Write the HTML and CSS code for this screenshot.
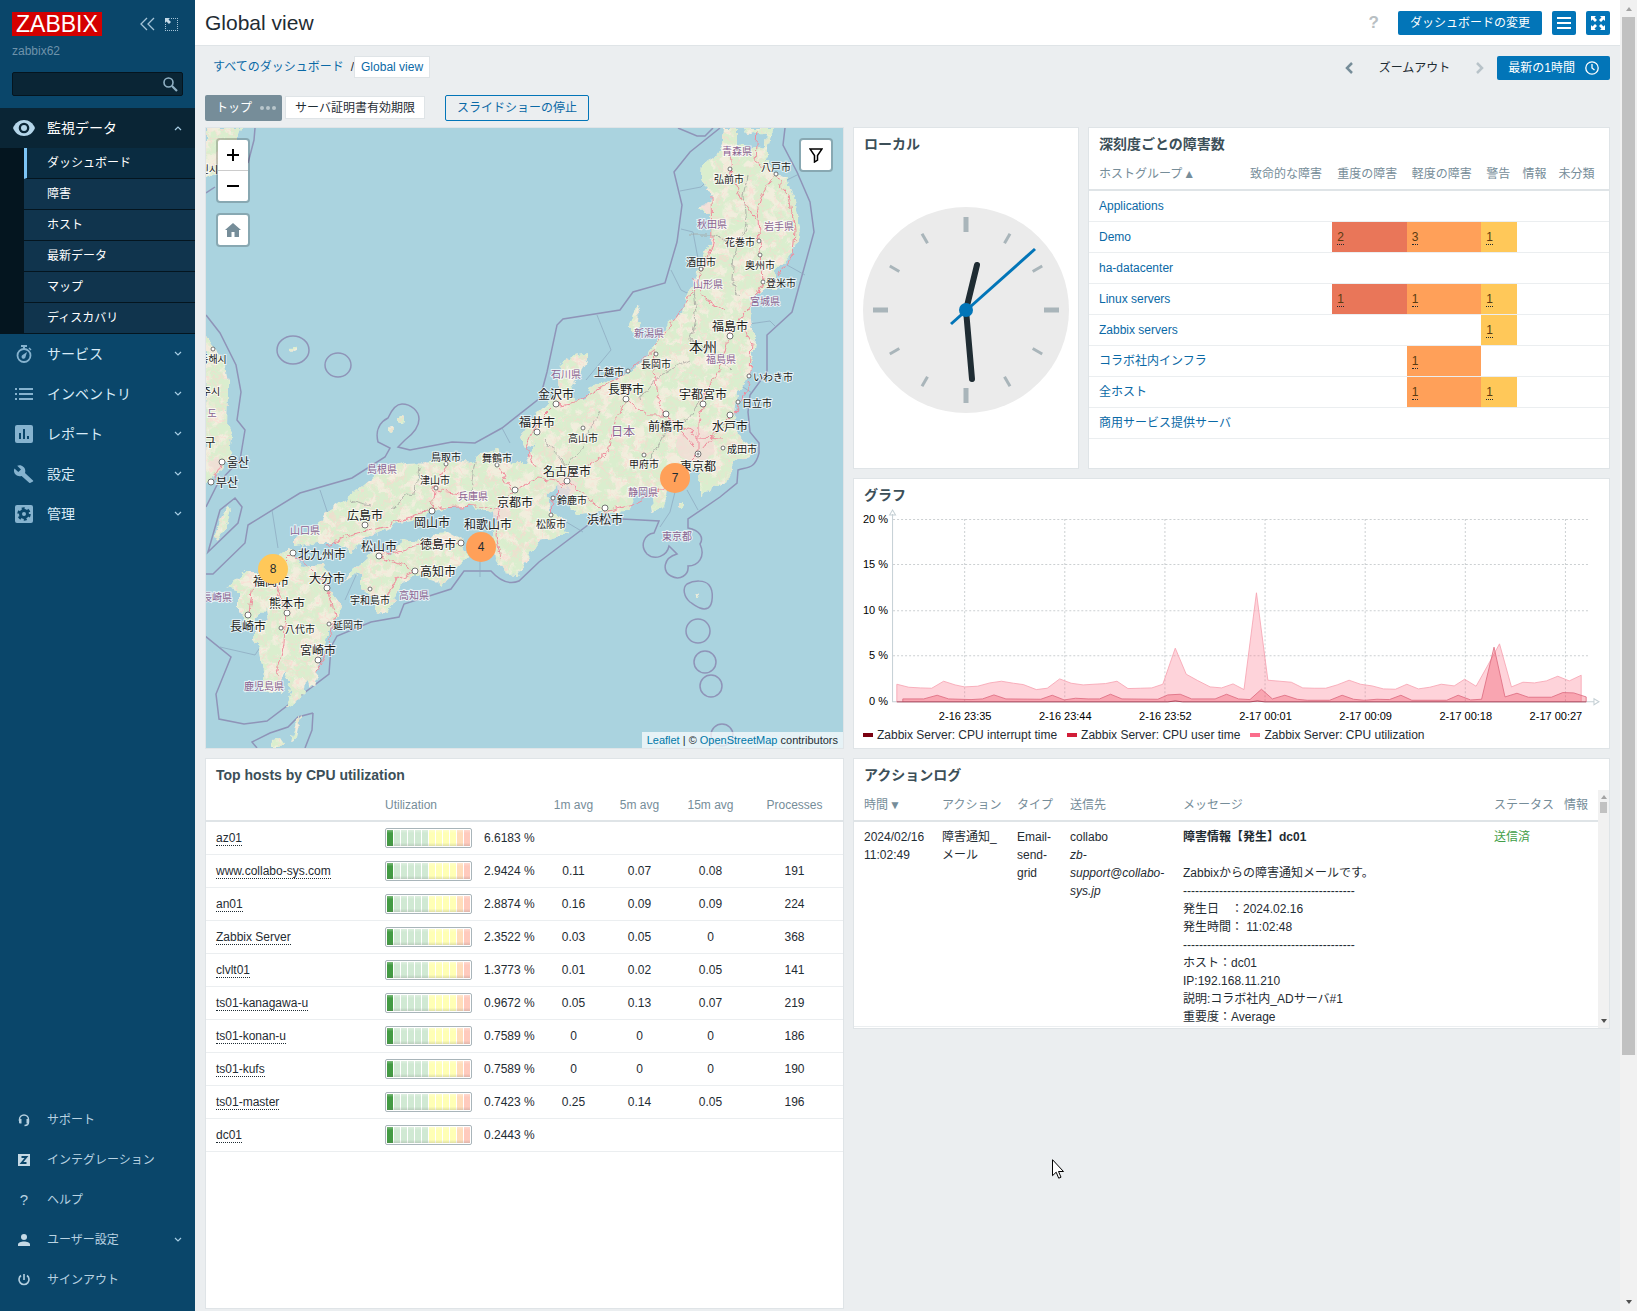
FILE: index.html
```html
<!DOCTYPE html>
<html lang="ja">
<head>
    <meta charset="UTF-8">
    <meta name="viewport" content="width=device-width, initial-scale=1.0">
    <title>Global view</title>
    <link rel="stylesheet" href="styles.css">
</head>
<body>
    <aside class="sidebar">
        <div class="sidebar-header">
            <a class="logo" href="#">ZABBIX</a>
            <button class="icon-btn" aria-label="Collapse">
                <svg width="16" height="14" viewBox="0 0 16 14"><path d="M8 1L2 7l6 6M15 1L9 7l6 6" fill="none" stroke="#a6c4d8" stroke-width="1.3"/></svg>
            </button>
            <button class="icon-btn" aria-label="Hide">
                <svg width="13" height="13" viewBox="0 0 13 13"><path d="M6 .5h7M12.500 0v13M0 12.500h13M.5 6v7" fill="none" stroke="#a6c4d8" stroke-dasharray="1 1"/><path d="M0 0h5L3.500 1.500 6 4 4 6 1.500 3.500 0 5z" fill="#c4dae8"/></svg>
            </button>
        </div>
        <div class="server-name">zabbix62</div>
        <form class="search">
            <input type="text" aria-label="検索">
            <button type="button" aria-label="検索">
                <svg width="15" height="15" viewBox="0 0 15 15" fill="none" stroke="#8fb0c4"><circle cx="5.500" cy="5.500" r="4.500" stroke-width="1.600"/><path d="M9 9l5 5" stroke-width="2.200"/></svg>
            </button>
        </form>

        <nav class="menu-main">
            <a class="menu-item open" href="#">
                <svg class="menu-icon" viewBox="0 0 22 16"><path d="M11 0C6 0 2 3 0 8c2 5 6 8 11 8s9-3 11-8c-2-5-6-8-11-8z" fill="#b5d6ea"/><circle cx="11" cy="8" r="5.300" fill="#0a2535"/><circle cx="11" cy="8" r="3" fill="#b5d6ea"/></svg>
                <span>監視データ</span>
                <svg class="chevron" viewBox="0 0 8 6"><path d="M1 5l3-3 3 3"/></svg>
            </a>
            <div class="submenu">
                <a class="active" href="#">ダッシュボード</a>
                <a href="#">障害</a>
                <a href="#">ホスト</a>
                <a href="#">最新データ</a>
                <a href="#">マップ</a>
                <a href="#">ディスカバリ</a>
            </div>
            <a class="menu-item" href="#">
                <svg class="menu-icon" viewBox="0 0 22 18"><path d="M8 1h6M11 1v3" stroke="#86b3cf" stroke-width="2"/><circle cx="11" cy="10.500" r="6.500" fill="none" stroke="#86b3cf" stroke-width="1.800"/><path d="M16 3l2 2" stroke="#86b3cf" stroke-width="1.500"/><path d="M14 7l-1.500 5a2 2 0 1 1-3-2z" fill="#86b3cf"/></svg>
                <span>サービス</span>
                <svg class="chevron" viewBox="0 0 8 6"><path d="M1 1l3 3 3-3"/></svg>
            </a>
            <a class="menu-item" href="#">
                <svg class="menu-icon" viewBox="0 0 22 18"><path d="M2 4h2M6 4h14M2 9h2M6 9h14M2 14h2M6 14h14" stroke="#86b3cf" stroke-width="2"/></svg>
                <span>インベントリ</span>
                <svg class="chevron" viewBox="0 0 8 6"><path d="M1 1l3 3 3-3"/></svg>
            </a>
            <a class="menu-item" href="#">
                <svg class="menu-icon" viewBox="0 0 22 18"><rect x="2" width="18" height="18" rx="2" fill="#86b3cf"/><path d="M7 14V8M11 14V4M15 14v-3" stroke="#0a466a" stroke-width="2"/></svg>
                <span>レポート</span>
                <svg class="chevron" viewBox="0 0 8 6"><path d="M1 1l3 3 3-3"/></svg>
            </a>
            <a class="menu-item" href="#">
                <svg class="menu-icon" viewBox="0 0 22 18"><path d="M20 15.500L12 8c.7-2.200.2-4.500-1.500-6C8.700.2 6.200-.1 4.200.8L8 4.400 5.300 7 1.500 3.500C.5 5.500 1 8 2.600 9.600c1.600 1.600 4 2 6 1.300l7.600 6.800c.4.400 1 .4 1.300 0l2.500-1.300c.3-.3.300-.6 0-.9z" fill="#86b3cf"/></svg>
                <span>設定</span>
                <svg class="chevron" viewBox="0 0 8 6"><path d="M1 1l3 3 3-3"/></svg>
            </a>
            <a class="menu-item" href="#">
                <svg class="menu-icon" viewBox="0 0 22 18"><rect x="2" width="18" height="18" rx="2" fill="#86b3cf"/><circle cx="11" cy="9" r="3.500" fill="none" stroke="#0a466a" stroke-width="3"/><circle cx="11" cy="9" r="5.500" fill="none" stroke="#0a466a" stroke-width="2.500" stroke-dasharray="2.880 2.880"/></svg>
                <span>管理</span>
                <svg class="chevron" viewBox="0 0 8 6"><path d="M1 1l3 3 3-3"/></svg>
            </a>
        </nav>

        <nav class="menu-user">
            <a class="menu-item" href="#">
                <svg class="menu-icon" viewBox="0 0 22 18"><path d="M6.500 10V8.500a4.500 4.500 0 0 1 9 0V11c0 2-1 3.500-4 3.500" fill="none" stroke="#b5d0e0" stroke-width="1.500"/><path d="M6 8h2.500v4.500H7A1 1 0 0 1 6 11.500zM13.500 8H16v4.500h-2.500z" fill="#b5d0e0"/></svg>
                <span>サポート</span>
            </a>
            <a class="menu-item" href="#">
                <svg class="menu-icon" viewBox="0 0 22 18"><rect x="5" y="3" width="12" height="12" fill="#c5d9e5"/><path d="M8.500 6h5l-5 6h5" fill="none" stroke="#0a466a" stroke-width="1.800"/></svg>
                <span>インテグレーション</span>
            </a>
            <a class="menu-item" href="#">
                <span class="menu-icon question">?</span>
                <span>ヘルプ</span>
            </a>
            <a class="menu-item" href="#">
                <svg class="menu-icon" viewBox="0 0 22 18"><circle cx="11" cy="6" r="3" fill="#c5d9e5"/><path d="M5 15v-1.500c0-2 3-3 6-3s6 1 6 3V15z" fill="#c5d9e5"/></svg>
                <span>ユーザー設定</span>
                <svg class="chevron" viewBox="0 0 8 6"><path d="M1 1l3 3 3-3"/></svg>
            </a>
            <a class="menu-item" href="#">
                <svg class="menu-icon" viewBox="0 0 22 18"><path d="M11 3v6M8 4.500a5 5 0 1 0 6 0" fill="none" stroke="#b5d0e0" stroke-width="1.600"/></svg>
                <span>サインアウト</span>
            </a>
        </nav>
    </aside>

    <div class="wrapper">
        <header class="page-header">
            <h1>Global view</h1>
            <a class="help" href="#">?</a>
            <button class="btn">ダッシュボードの変更</button>
            <button class="btn btn-icon" aria-label="メニュー">
                <svg width="14" height="14" viewBox="0 0 14 14"><path d="M0 2h14M0 7h14M0 12h14" stroke="#fff" stroke-width="2"/></svg>
            </button>
            <button class="btn btn-icon" aria-label="全画面">
                <svg width="14" height="14" viewBox="0 0 14 14" fill="#fff"><path id="arrow" d="M0 0h5L3.500 1.500 6 4 4 6 1.500 3.500 0 5z"/><use href="#arrow" transform="rotate(90 7 7)"/><use href="#arrow" transform="rotate(180 7 7)"/><use href="#arrow" transform="rotate(270 7 7)"/></svg>
            </button>
        </header>

        <div class="filter-bar">
            <nav class="breadcrumbs">
                <a href="#">すべてのダッシュボード</a>
                <span class="slash">/</span>
                <a class="current" href="#">Global view</a>
            </nav>
            <button class="step" aria-label="前へ"><svg width="8" height="12" viewBox="0 0 8 12"><path d="M7 1L2 6l5 5" fill="none" stroke="#768d99" stroke-width="2.500"/></svg></button>
            <button class="zoom-out">ズームアウト</button>
            <button class="step" aria-label="次へ"><svg width="8" height="12" viewBox="0 0 8 12"><path d="M1 1l5 5-5 5" fill="none" stroke="#b8c3c9" stroke-width="2.500"/></svg></button>
            <button class="btn btn-time">最新の1時間
                <svg width="14" height="14" viewBox="0 0 14 14" fill="none" stroke="#fff" stroke-width="1.300"><circle cx="7" cy="7" r="6.200"/><path d="M7 3v4l2.500 2"/></svg>
            </button>
        </div>

        <div class="tabs">
            <button class="tab selected">トップ
                <svg width="16" height="4" viewBox="0 0 16 4" fill="#b9c6cc"><circle cx="2" cy="2" r="2"/><circle cx="8" cy="2" r="2"/><circle cx="14" cy="2" r="2"/></svg>
            </button>
            <button class="tab">サーバ証明書有効期限</button>
            <button class="btn-outline">スライドショーの停止</button>
        </div>

        <main class="dashboard">
            <section class="widget map">
                <svg class="map-canvas" viewBox="205 128 639 620" preserveAspectRatio="xMidYMid slice">
                    <defs>
                        <filter id="coast" x="0" y="0" width="1" height="1">
                            <feTurbulence type="fractalNoise" baseFrequency="0.12" numOctaves="3" seed="4"/>
                            <feDisplacementMap in="SourceGraphic" scale="8" xChannelSelector="R" yChannelSelector="G"/>
                        </filter>
                        <filter id="forest" x="0" y="0" width="1" height="1">
                            <feTurbulence type="fractalNoise" baseFrequency="0.09" numOctaves="4" seed="11"/>
                            <feColorMatrix values="0 0 0 0 0.7  0 0 0 0 0.86  0 0 0 0 0.62  0 7 0 0 -2.6"/>
                            <feComposite in2="SourceGraphic" operator="in"/>
                        </filter>
                        <filter id="roads" x="0" y="0" width="1" height="1">
                            <feTurbulence type="fractalNoise" baseFrequency="0.05" numOctaves="3" seed="7"/>
                            <feColorMatrix values="0 0 0 0 0.98  0 0 0 0 0.66  0 0 0 0 0.62  1 0 0 0 0"/>
                            <feComponentTransfer><feFuncA type="table" tableValues="0 0 0 0 0 0 0 0 0 0 0 0 0.3 0 0 0 0.6 0 0 0 0.3 0 0 0 0 0 0 0 0 0 0 0 0"/></feComponentTransfer>
                            <feComposite in2="SourceGraphic" operator="in"/>
                        </filter>
                        <g id="land">
                            <path d="M206 128h34l-5 18-8 14-10 12-11 8z"/>
                            <path d="M206 335l8 12 10 14 4 20-1 44 5 10-2 20-8 14-8 7-9 7z"/>
                            <path d="M723 128L722 145 716 156 703 165 702 178 707 188 712 197 710 203 697 208 702 213 710 213 713 235 705 252 700 268 689 292 683 312 667 325 653 345 643 362 627 375 603 382 590 388 587 398 576 401 568 392 575 382 587 362 587 352 573 355 560 364 558 388 547 405 533 418 520 438 525 448 535 443 525 463 505 463 498 450 482 453 472 462 452 460 440 462 405 463 385 467 362 487 345 500 325 513 315 530 295 537 295 547 318 543 338 543 352 553 365 537 385 530 405 520 418 518 452 507 472 507 490 513 500 517 492 533 495 557 505 573 517 575 525 563 540 540 567 533 563 520 550 510 548 495 558 485 567 487 570 503 575 515 600 513 627 512 637 490 650 490 653 512 663 507 667 490 680 488 687 475 697 465 700 478 700 497 712 488 727 483 733 463 750 457 754 448 740 438 733 425 738 392 748 378 753 360 755 338 750 322 753 298 765 288 778 290 775 270 787 258 797 245 800 228 793 198 787 178 773 172 767 158 767 148 772 128 767 128 765 145 750 148 737 145 737 128z"/>
                            <path d="M743 128h25l-3 7-12-3-6 3z"/>
                            <path d="M362 572L342 582 350 573 365 560 378 549 392 555 402 539 418 542 432 534 448 532 462 540 468 557 455 570 443 587 435 580 418 575 402 582 395 597 388 613 375 610 377 597 362 590z"/>
                            <path d="M285 553L292 548 302 567 322 565 330 573 325 585 342 607 335 620 328 633 320 660 315 687 305 680 303 697 285 708 292 690 285 672 280 680 283 693 262 691 264 670 258 643 253 640 255 623 268 620 266 608 250 624 238 610 238 590 227 587 245 573 258 573 272 559z"/>
                            <path d="M227 508l3 2-6 20-7 10-2-6 6-16z"/>
                            <path d="M639 303l2 8-5 6 5 6-7 10-5-7 4-12z"/>
                            <path d="M301 715l-5 22-5 6 4-18zM272 740l8-2 4 6-4 4h-9z"/>
                            <circle cx="293" cy="350" r="3"/><circle cx="402" cy="420" r="4"/><circle cx="391" cy="430" r="3"/>
                            <circle cx="681" cy="505" r="3"/><circle cx="698" cy="595" r="2"/>
                        </g>
                    </defs>
                    <rect x="205" y="128" width="639" height="620" fill="#aad3df"/>
                    <g class="sea-border">
                        <path d="M255 128l-1 12-6 23M206 193l9-6M206 315l14 18 16 32 5 27-4 28 8 10-5 30-22 23-12 24"/>
                        <ellipse cx="293" cy="350" rx="16" ry="14"/><ellipse cx="338" cy="365" rx="13" ry="12"/>
                        <path d="M206 574h7l32-31 3-18 52-32 52-15 33-21 5-9-12-6c-3-12 2-20 10-24 4-9 9-14 14-14 9 0 17 7 17 15s-6 15-14 21l-7 7 12 3 42-8 23 1 27-15 38-30 7-26 10-47 6-6 57-9 13-18 32-9 12-41 5-37-8-33 16-20 30-24M678 128l19 8h8l8-8"/>
                        <path d="M785 128l-2 17 14 27 13 30 4 30-22 80-25 23v37l-17 23-2 17 2 20 9 11v10c-4 17-13 14-21 17l-1 13-17 14-32 22v9c12 2 16 10 12 16 6 13-2 22-12 22 1 9-8 15-17 10-9-5-8-18 6-22l-8-8c-2 10-14 15-22 8-8-9-2-20 7-21l5-12-37-2h-26l-57 43-20 19c-10 4-20-1-28-10h-27l-13 18-47 15-5 13-28 5-34 14-6 11-2 27-62 47-23 3-25-5-3-25 15-37-26-21"/>
                        <path d="M235 498l7 9-4 16-30 29 12-42zM313 713l-1 17-7 18M313 713l-15 4-10 10-18 6-18 9 5 6"/>
                        <path d="M687 584c7-4 18-4 22 1 5 6 4 20-1 23-6 3-12-2-18-6-6-5-8-14-3-18z"/>
                        <circle cx="698" cy="631" r="12"/><circle cx="705" cy="662" r="11"/><circle cx="711" cy="686" r="11"/><circle cx="722" cy="735" r="11"/>
                    </g>
                    <path class="pref-border" d="M680 191l21-4 12-12M681 229l12 3 6 32M671 270l10 20 12 6M597 315l14 35-25 30M320 490l10 30M272 510l6 38M220 647l35 8 20-30M345 600l12-27M480 560v17M749 324l21-3 5 5M740 385l12 8M787 265l18 10M502 428l8 15M675 492l-5 20-10 15M687 490l11 20M563 520l20 12M787 180l12-6"/>
                    <g filter="url(#coast)">
                        <use href="#land" fill="#f1eedd"/>
                        <use href="#land" filter="url(#forest)"/>
                        <use href="#land" filter="url(#roads)"/>
                        <g class="city-area"><circle cx="695" cy="445" r="18"/><circle cx="567" cy="487" r="10"/><circle cx="502" cy="513" r="8"/><circle cx="268" cy="577" r="6"/><circle cx="215" cy="465" r="7"/><circle cx="706" cy="208" r="5"/></g>
                        <path class="grey-border" d="M748 175l-5 20 3 30-12 30-2 25 8 15M693 290l3 25-6 25 20 10 20 18M640 400l20-25 30-15M585 445l-18 20-10-12M700 400l-12 20-20 10-18 30M600 410l-15 30M545 440l20 25M420 465l-5 25-25 20M475 460l-5 35M350 500l20 5M690 235l25 0 18 10"/>
                        <path class="motorway" d="M775 174l-13 22-5 15 4 40 2 30-12 25-15 20-6 10M775 174l14 22 6 34-2 24-14 20M757 130l-2 30 15 12M730 150l2 26 10 24 14 20M712 197l1 42-8 26-14 30-20 30-17 20M724 310l-20-12-10-20M730 330l-8 35-16 28-8 30v30M745 325l7 20-3 40-12 25-20 22-15 18M653 350l4 40 5 20 32 35M653 350l-30 25-22 12-25 15-22 4-18 18-10 22 10 22M626 400l20 15h20l32 22 25 1M626 400l-12 22-6 30-40 28M698 455l-32 32-30 16-32 8-35-28M567 483l-15 15-1 20M567 483l-30-5-22 12-15 20-24-4-34 2-25 6-35 14-30 6-26 12M500 510l-4 25 5 25M446 464l-12 25-2 22M497 465l14 24M436 490l35 6M293 553l-20 20-20 12-4 28M293 553l34 32 8 30-8 36-10 22M272 575l14 35-2 34-8 30M415 571l-36-15 40-10 42-4M415 571l-20 10-12 22M222 462l-10 20"/>
                    </g>
                    <g class="town">
                        <circle cx="776" cy="174" r="2"/><circle cx="730" cy="169" r="2"/><circle cx="759" cy="241" r="2"/><circle cx="701" cy="269" r="2"/><circle cx="760" cy="255" r="2"/><circle cx="763" cy="282" r="2"/><circle cx="656" cy="354" r="2"/><circle cx="628" cy="371" r="2"/><circle cx="749" cy="376" r="2"/><circle cx="738" cy="402" r="2"/><circle cx="583" cy="428" r="2"/><circle cx="644" cy="455" r="2"/><circle cx="723" cy="448" r="2"/><circle cx="553" cy="498" r="2"/><circle cx="551" cy="515" r="2"/><circle cx="446" cy="464" r="2"/><circle cx="497" cy="465" r="2"/><circle cx="436" cy="488" r="2"/><circle cx="370" cy="589" r="2"/><circle cx="281" cy="628" r="2"/><circle cx="329" cy="624" r="2"/><circle cx="213" cy="349" r="2"/>
                        <circle cx="730" cy="336" r="3"/><circle cx="556" cy="404" r="3"/><circle cx="626" cy="399" r="3"/><circle cx="703" cy="404" r="3"/><circle cx="537" cy="432" r="3"/><circle cx="666" cy="414" r="3"/><circle cx="730" cy="415" r="3"/><circle cx="567" cy="481" r="3"/><circle cx="605" cy="508" r="3"/><circle cx="515" cy="490" r="3"/><circle cx="365" cy="525" r="3"/><circle cx="432" cy="511" r="3"/><circle cx="379" cy="556" r="3"/><circle cx="461" cy="543" r="3"/><circle cx="293" cy="553" r="3"/><circle cx="415" cy="571" r="3"/><circle cx="327" cy="588" r="3"/><circle cx="287" cy="613" r="3"/><circle cx="248" cy="615" r="3"/><circle cx="318" cy="660" r="3"/><circle cx="222" cy="462" r="3"/><circle cx="211" cy="482" r="3"/>
                        <circle cx="698" cy="454" r="3"/><circle cx="698" cy="454" r="1"/>
                    </g>
                    <g class="label pref">
                        <text x="737" y="155">青森県</text><text x="712" y="228">秋田県</text><text x="779" y="230">岩手県</text><text x="708" y="288">山形県</text><text x="765" y="305">宮城県</text><text x="649" y="337">新潟県</text><text x="721" y="363">福島県</text><text x="566" y="378">石川県</text><text x="643" y="496">静岡県</text><text x="677" y="540">東京都</text><text x="382" y="473">島根県</text><text x="473" y="500">兵庫県</text><text x="305" y="534">山口県</text><text x="414" y="599">高知県</text><text x="217" y="601">長崎県</text><text x="264" y="690">鹿児島県</text><text x="212" y="417">도</text>
                        <text class="country" x="623" y="436">日本</text>
                    </g>
                    <g class="label small">
                        <text x="776" y="171">八戸市</text><text x="729" y="183">弘前市</text><text x="740" y="246">花巻市</text><text x="701" y="266">酒田市</text><text x="760" y="269">奥州市</text><text x="781" y="287">登米市</text><text x="656" y="368">長岡市</text><text x="609" y="376">上越市</text><text x="773" y="381">いわき市</text><text x="757" y="407">日立市</text><text x="583" y="442">高山市</text><text x="644" y="468">甲府市</text><text x="742" y="453">成田市</text><text x="572" y="504">鈴鹿市</text><text x="551" y="528">松阪市</text><text x="446" y="461">鳥取市</text><text x="497" y="462">舞鶴市</text><text x="435" y="484">津山市</text><text x="370" y="604">宇和島市</text><text x="300" y="633">八代市</text><text x="348" y="629">延岡市</text><text x="209" y="173">인시</text><text x="213" y="363">동해시</text><text x="211" y="395">주시</text>
                    </g>
                    <g class="label large">
                        <text x="730" y="331">福島市</text><text x="556" y="399">金沢市</text><text x="626" y="394">長野市</text><text x="703" y="399">宇都宮市</text><text x="537" y="427">福井市</text><text x="666" y="431">前橋市</text><text x="730" y="431">水戸市</text><text x="698" y="471">東京都</text><text x="567" y="476">名古屋市</text><text x="605" y="524">浜松市</text><text x="515" y="507">京都市</text><text x="365" y="520">広島市</text><text x="432" y="527">岡山市</text><text x="488" y="529">和歌山市</text><text x="379" y="551">松山市</text><text x="438" y="549">徳島市</text><text x="322" y="559">北九州市</text><text x="438" y="576">高知市</text><text x="271" y="586">福岡市</text><text x="327" y="583">大分市</text><text x="287" y="608">熊本市</text><text x="248" y="631">長崎市</text><text x="318" y="655">宮崎市</text><text x="238" y="467">울산</text><text x="227" y="487">부산</text><text x="210" y="447">구</text>
                        <text class="island" x="703" y="352">本州</text>
                    </g>
                    <g class="cluster">
                        <circle cx="273" cy="569" r="15" fill="#ffc859"/><text x="273" y="573">8</text>
                        <circle cx="481" cy="547" r="15" fill="#ffa059"/><text x="481" y="551">4</text>
                        <circle cx="675" cy="478" r="15" fill="#ffa059"/><text x="675" y="482">7</text>
                    </g>
                </svg>
                <div class="map-controls">
                    <div class="control">
                        <button aria-label="Zoom in"><svg width="12" height="12" viewBox="0 0 12 12"><path d="M0 6h12M6 0v12" stroke="#000" stroke-width="2"/></svg></button>
                        <button aria-label="Zoom out"><svg width="12" height="12" viewBox="0 0 12 12"><path d="M0 6h12" stroke="#000" stroke-width="2"/></svg></button>
                    </div>
                    <div class="control">
                        <button aria-label="Home"><svg width="16" height="14" viewBox="0 0 16 14"><path d="M8 0L0 7h2v7h4.500V9h3v5H14V7h2z" fill="#768d99"/></svg></button>
                    </div>
                </div>
                <div class="control map-filter">
                    <button aria-label="Filter"><svg width="14" height="15" viewBox="0 0 14 15"><path d="M1 1h12L8.500 7.500V12L5.500 14V7.500z" fill="none" stroke="#000" stroke-width="1.500"/></svg></button>
                </div>
                <div class="attribution"><a href="#">Leaflet</a> | © <a href="#">OpenStreetMap</a> contributors</div>
            </section>

            <section class="widget clock">
                <h2>ローカル</h2>
                <div class="clock-face">
                    <svg viewBox="0 0 206 206">
                        <circle cx="103" cy="103" r="103" fill="#ebebeb"/>
                        <g stroke="#a9b5ba" stroke-width="5"><path d="M103 10v15M103 181v15M10 103h15M181 103h15"/></g>
                        <g stroke="#a9b5ba" stroke-width="3">
                            <path id="tick" d="M103 15v11" transform="rotate(30 103 103)"/>
                            <use href="#tick" transform="rotate(30 103 103)"/><use href="#tick" transform="rotate(90 103 103)"/><use href="#tick" transform="rotate(120 103 103)"/><use href="#tick" transform="rotate(180 103 103)"/><use href="#tick" transform="rotate(210 103 103)"/><use href="#tick" transform="rotate(270 103 103)"/><use href="#tick" transform="rotate(300 103 103)"/>
                        </g>
                        <path d="M103 103l11-45M103 103l6 69" stroke="#1f2c33" stroke-width="6" stroke-linecap="round"/>
                        <path d="M88 117l84-75" stroke="#0275b8" stroke-width="3"/>
                        <circle cx="103" cy="103" r="7" fill="#0275b8"/>
                    </svg>
                </div>
            </section>

            <section class="widget">
                <h2>深刻度ごとの障害数</h2>
                <table class="severity">
                    <thead>
                        <tr><th><a href="#">ホストグループ<i class="sort">▲</i></a></th><th>致命的な障害</th><th>重度の障害</th><th>軽度の障害</th><th>警告</th><th>情報</th><th>未分類</th></tr>
                    </thead>
                    <tbody>
                        <tr><td><a href="#">Applications</a></td><td></td><td></td><td></td><td></td><td></td><td></td></tr>
                        <tr><td><a href="#">Demo</a></td><td></td><td class="high"><button>2</button></td><td class="average"><button>3</button></td><td class="warning"><button>1</button></td><td></td><td></td></tr>
                        <tr><td><a href="#">ha-datacenter</a></td><td></td><td></td><td></td><td></td><td></td><td></td></tr>
                        <tr><td><a href="#">Linux servers</a></td><td></td><td class="high"><button>1</button></td><td class="average"><button>1</button></td><td class="warning"><button>1</button></td><td></td><td></td></tr>
                        <tr><td><a href="#">Zabbix servers</a></td><td></td><td></td><td></td><td class="warning"><button>1</button></td><td></td><td></td></tr>
                        <tr><td><a href="#">コラボ社内インフラ</a></td><td></td><td></td><td class="average"><button>1</button></td><td></td><td></td><td></td></tr>
                        <tr><td><a href="#">全ホスト</a></td><td></td><td></td><td class="average"><button>1</button></td><td class="warning"><button>1</button></td><td></td><td></td></tr>
                        <tr><td><a href="#">商用サービス提供サーバ</a></td><td></td><td></td><td></td><td></td><td></td><td></td></tr>
                    </tbody>
                </table>
            </section>

            <section class="widget graph">
                <h2>グラフ</h2>
                <svg class="graph-svg" viewBox="5 29 754 219">
                    <g class="grid"><path d="M44 44.500h695M44 89.500h695M44 135.500h695M44 180.500h695M115.500 44v182M215.500 44v182M315.500 44v182M415.500 44v182M515.500 44v182M615.500 44v182M715.500 44v182"/></g>
                    <path class="axis" d="M43.500 39v187.500H744M43.500 35l-3 5h6zM749 226.500l-5-3v6z"/>
                    <svg width="780" height="275" viewBox="0 0 1568 825" preserveAspectRatio="none">
                        <path class="utilization" d="M96 680V627L120 636 143 638 166 639 190 618 213 629 232 635 258 633 283 623 306 618 330 624 350 628 376 643 398 639 423 611 446 624 470 629 492 627 515 625 538 618 560 640 585 639 608 638 630 627 655 519 677 597 700 616 725 635 748 638 771 626 793 643 818 353 841 615 865 618 888 621 911 638 934 639 957 639 980 629 1004 615 1027 627 1050 632 1073 641 1097 642 1120 627 1143 641 1166 636 1189 627 1215 632 1236 612 1259 633 1283 569 1306 506 1330 635 1353 621 1376 623 1400 617 1423 603 1446 617 1470 600V680"/>
                        <path class="user-time" d="M108 680V671H150L177 660 200 671 245 673 268 671 291 659 315 671 385 672 408 660 432 674 455 669 480 671 503 671 525 657 548 671 620 672 640 659 665 657 688 671 735 671 758 657 782 671 805 673 828 642 850 671 875 660 900 672 920 675 965 675 990 660 1013 672 1035 675 1060 672 1085 673 1108 660 1130 675 1200 675 1223 660 1248 674 1270 672 1295 516 1317 665 1341 654 1364 666 1410 666 1433 652 1455 653 1480 665V680"/>
                        <path class="interrupt" d="M96 680H640L655 677 670 680H805L820 677 835 680H1480"/>
                    </svg>
                    <g class="y-labels"><text x="39" y="48">20 %</text><text x="39" y="93">15 %</text><text x="39" y="139">10 %</text><text x="39" y="184">5 %</text><text x="39" y="230">0 %</text></g>
                    <g class="x-labels"><text x="116" y="245">2-16 23:35</text><text x="216" y="245">2-16 23:44</text><text x="316" y="245">2-16 23:52</text><text x="416" y="245">2-17 00:01</text><text x="516" y="245">2-17 00:09</text><text x="616" y="245">2-17 00:18</text><text x="706" y="245">2-17 00:27</text></g>
                </svg>
                <ul class="legend">
                    <li class="dark">Zabbix Server: CPU interrupt time</li>
                    <li class="red">Zabbix Server: CPU user time</li>
                    <li class="pink">Zabbix Server: CPU utilization</li>
                </ul>
            </section>

            <section class="widget top-hosts">
                <h2>Top hosts by CPU utilization</h2>
                <table class="hosts">
                    <colgroup><col class="c-name"><col class="c-bar"><col class="c-value"><col class="c-1m"><col class="c-5m"><col class="c-15m"><col></colgroup>
                    <thead>
                        <tr><th></th><th colspan="2">Utilization</th><th>1m avg</th><th>5m avg</th><th>15m avg</th><th>Processes</th></tr>
                    </thead>
                    <tbody>
                        <tr><td><a href="#">az01</a></td><td><span class="bar"></span></td><td>6.6183 %</td><td></td><td></td><td></td><td></td></tr>
                        <tr><td><a href="#">www.collabo-sys.com</a></td><td><span class="bar"></span></td><td>2.9424 %</td><td>0.11</td><td>0.07</td><td>0.08</td><td>191</td></tr>
                        <tr><td><a href="#">an01</a></td><td><span class="bar"></span></td><td>2.8874 %</td><td>0.16</td><td>0.09</td><td>0.09</td><td>224</td></tr>
                        <tr><td><a href="#">Zabbix Server</a></td><td><span class="bar"></span></td><td>2.3522 %</td><td>0.03</td><td>0.05</td><td>0</td><td>368</td></tr>
                        <tr><td><a href="#">clvlt01</a></td><td><span class="bar"></span></td><td>1.3773 %</td><td>0.01</td><td>0.02</td><td>0.05</td><td>141</td></tr>
                        <tr><td><a href="#">ts01-kanagawa-u</a></td><td><span class="bar"></span></td><td>0.9672 %</td><td>0.05</td><td>0.13</td><td>0.07</td><td>219</td></tr>
                        <tr><td><a href="#">ts01-konan-u</a></td><td><span class="bar"></span></td><td>0.7589 %</td><td>0</td><td>0</td><td>0</td><td>186</td></tr>
                        <tr><td><a href="#">ts01-kufs</a></td><td><span class="bar"></span></td><td>0.7589 %</td><td>0</td><td>0</td><td>0</td><td>190</td></tr>
                        <tr><td><a href="#">ts01-master</a></td><td><span class="bar"></span></td><td>0.7423 %</td><td>0.25</td><td>0.14</td><td>0.05</td><td>196</td></tr>
                        <tr><td><a href="#">dc01</a></td><td><span class="bar"></span></td><td>0.2443 %</td><td></td><td></td><td></td><td></td></tr>
                    </tbody>
                </table>
            </section>

            <section class="widget action-log">
                <h2>アクションログ</h2>
                <div class="log-body">
                    <table class="log">
                        <colgroup><col class="l-time"><col class="l-action"><col class="l-type"><col class="l-to"><col><col class="l-status"><col class="l-info"></colgroup>
                        <thead>
                            <tr><th><a href="#">時間<i class="sort">▼</i></a></th><th>アクション</th><th>タイプ</th><th>送信先</th><th>メッセージ</th><th>ステータス</th><th>情報</th></tr>
                        </thead>
                        <tbody>
                            <tr>
                                <td>2024/02/16 11:02:49</td>
                                <td>障害通知_<br>メール</td>
                                <td>Email-send-grid</td>
                                <td>collabo<br><em>zb-support@collabo-sys.jp</em></td>
                                <td><b>障害情報【発生】dc01</b><br><br>Zabbixからの障害通知メールです。<br>-------------------------------------------<br>発生日　：2024.02.16<br>発生時間： 11:02:48<br>-------------------------------------------<br>ホスト：dc01<br>IP:192.168.11.210<br>説明:コラボ社内_ADサーバ#1<br>重要度：Average</td>
                                <td class="sent">送信済</td>
                                <td></td>
                            </tr>
                        </tbody>
                    </table>
                    <div class="log-scroll"><i class="up"></i><i class="thumb"></i><i class="down"></i></div>
                </div>
            </section>
        </main>
    </div>

    <div class="page-scroll"><i class="up"></i><i class="thumb"></i><i class="down"></i></div>

    <svg class="cursor" width="12" height="20" viewBox="0 0 12 20"><path d="M.5.700v16l3.700-3.500 2.500 6 2.300-1-2.500-5.700h5z" fill="#fff" stroke="#000"/></svg>
</body>
</html>
```

FILE: styles.css
```css
* {
    box-sizing: border-box;
}

body {
    display: flex;
    height: 100vh;
    margin: 0;
    overflow: hidden;
    background: #ebeef0;
    color: #1f2c33;
    font-family: "Liberation Sans", "Noto Sans CJK JP", sans-serif;
    font-size: 12px;
    line-height: 18px;
}

a {
    color: #0a69a6;
    text-decoration: none;
}

button {
    padding: 0;
    border: none;
    background: none;
    color: inherit;
    font: inherit;
    cursor: pointer;
}

svg {
    flex-shrink: 0;
}

/* sidebar */
.sidebar {
    display: flex;
    flex-direction: column;
    flex-shrink: 0;
    width: 195px;
    padding-bottom: 11px;
    background: #0a466a;
}

.sidebar-header {
    display: flex;
    align-items: center;
    gap: 10px;
    padding: 12px 17px 0 12px;
}

.logo {
    margin-right: auto;
    padding: 0 4px;
    background: #d40000;
    color: #fff;
    font-size: 23px;
    line-height: 24px;
}

.icon-btn {
    display: flex;
}

.server-name {
    padding: 6px 12px 12px;
    color: #6f93aa;
}

.search {
    display: flex;
    align-items: center;
    height: 24px;
    margin: 0 12px 12px;
    padding-right: 4px;
    border: 1px solid #05151f;
    border-radius: 2px;
    background: #0a2535;
}

.search input {
    flex: 1;
    min-width: 0;
    border: none;
    background: none;
    color: #fff;
}

.search button {
    display: flex;
}

.menu-item {
    display: flex;
    align-items: center;
    height: 40px;
    padding: 0 13px;
    color: #d8ebf7;
    font-size: 14px;
}

.menu-item.open {
    background: #0a2535;
    color: #fff;
}

.menu-icon {
    width: 22px;
    height: 18px;
    margin-right: 12px;
}

.chevron {
    width: 8px;
    height: 6px;
    margin-left: auto;
    fill: none;
    stroke: #a6cde4;
    stroke-width: 1.2;
}

.submenu {
    padding-left: 24px;
    background: #04151f;
}

.submenu a {
    display: block;
    height: 31px;
    padding-left: 23px;
    border-bottom: 1px solid #04151f;
    background: #10344d;
    color: #fff;
    line-height: 31px;
}

.submenu .active {
    padding-left: 20px;
    border-left: 3px solid #7cc4f5;
    background: #0a2c41;
}

.menu-user {
    margin-top: auto;
}

.menu-user .menu-item {
    color: #b9d3e2;
    font-size: 12px;
}

.question {
    font-size: 15px;
    text-align: center;
}

/* header */
.wrapper {
    display: flex;
    flex: 1;
    flex-direction: column;
    min-width: 0;
}

.page-header {
    display: flex;
    align-items: center;
    gap: 10px;
    height: 46px;
    padding: 0 10px;
    border-bottom: 1px solid #dfe4e7;
    background: #fff;
}

h1 {
    flex: 1;
    margin: 0;
    font-size: 21px;
    font-weight: normal;
    line-height: 24px;
}

.help {
    margin-right: 9px;
    color: #b9bfc3;
    font-size: 17px;
    font-weight: bold;
}

.btn {
    display: flex;
    align-items: center;
    justify-content: center;
    height: 24px;
    padding: 0 12px;
    border-radius: 2px;
    background: #0275b8;
    color: #fff;
}

.btn-icon {
    width: 24px;
    padding: 0;
}

.filter-bar {
    display: flex;
    align-items: center;
    height: 44px;
    padding: 0 10px;
}

.breadcrumbs {
    display: flex;
    flex: 1;
    align-items: center;
    padding: 0 0 2px 8px;
}

.slash {
    padding-left: 7px;
}

.breadcrumbs .current {
    padding: 1px 6px;
    border: 1px solid #dfe4e7;
    background: #fff;
}

.step {
    display: flex;
}

.zoom-out {
    margin: 0 26px;
}

.btn-time {
    gap: 10px;
    margin-left: 13px;
    padding: 0 11px;
}

.tabs {
    display: flex;
    align-items: center;
    height: 37px;
    padding: 0 10px 2px;
}

.tab {
    height: 23px;
    margin-right: 20px;
    padding: 0 9px;
    border: 1px solid #dfe4e7;
    background: #fff;
}

.tab.selected {
    display: flex;
    align-items: center;
    gap: 8px;
    height: 26px;
    margin-right: 3px;
    padding: 0 6px 0 11px;
    border: none;
    border-radius: 2px;
    background: #768d99;
    color: #fff;
}

.btn-outline {
    height: 26px;
    padding: 0 11px;
    border: 1px solid #0275b8;
    border-radius: 2px;
    color: #0a69a6;
}

/* dashboard */
.dashboard {
    display: grid;
    flex: 1;
    grid-template-columns: 639fr 226fr 522fr;
    grid-template-rows: 342px 271px 271px 1fr;
    gap: 9px;
    min-height: 0;
    padding: 0 10px 2px;
}

.widget {
    display: flex;
    flex-direction: column;
    min-width: 0;
    overflow: hidden;
    border: 1px solid #dfe4e7;
    background: #fff;
}

h2 {
    margin: 0;
    padding: 7px 10px 6px;
    color: #3c4f58;
    font-size: 14px;
    line-height: 18px;
}

.graph,
.action-log {
    grid-column: 2 / 4;
}

.top-hosts {
    grid-row: 3 / 5;
    grid-column: 1;
}

table {
    width: 100%;
    border-collapse: collapse;
    table-layout: fixed;
}

th {
    height: 31px;
    padding: 0 5px;
    border-bottom: 2px solid #dfe4e7;
    color: #768d99;
    font-weight: normal;
    text-align: left;
    white-space: nowrap;
}

th a {
    color: inherit;
}

td {
    padding: 0 5px;
    border-bottom: 1px solid #ebeef0;
}

th:first-child,
td:first-child {
    padding-left: 10px;
}

.sort {
    margin-left: 1px;
    font-style: normal;
}

/* map */
.map {
    position: relative;
    grid-row: 1 / 3;
}

.map-canvas {
    width: 100%;
    height: 100%;
}

.sea-border {
    fill: none;
    stroke: #8f94b8;
    stroke-width: 1.5;
}

.pref-border {
    fill: none;
    stroke: #8ba6bd;
    stroke-width: 0.7;
}

.grey-border {
    fill: none;
    stroke: #a5a5a0;
    stroke-width: 0.8;
}

.motorway {
    fill: none;
    stroke: #f08c9c;
    stroke-width: 1;
}

.city-area {
    fill: #f6dcd8;
    opacity: 0.7;
}

.town {
    fill: #fff;
    stroke: #555;
    stroke-width: 0.8;
}

.label {
    font-family: "Noto Sans CJK JP", "Noto Sans CJK KR", sans-serif;
    font-size: 12px;
    text-anchor: middle;
    fill: #222;
    stroke: rgba(255, 255, 255, 0.7);
    stroke-width: 2px;
    paint-order: stroke;
}

.small,
.pref {
    font-size: 10px;
}

.pref {
    fill: #8a6391;
}

.country {
    font-size: 12px;
}

.island {
    font-size: 14px;
}

.cluster {
    font-size: 12px;
    text-anchor: middle;
    fill: #1f2c33;
}

.map-controls,
.map-filter {
    position: absolute;
    top: 10px;
}

.map-controls {
    display: flex;
    flex-direction: column;
    gap: 10px;
    left: 10px;
}

.map-filter {
    right: 10px;
}

.control {
    border: 2px solid rgba(0, 0, 0, 0.2);
    border-radius: 4px;
    background: #fff;
    background-clip: padding-box;
}

.control button {
    display: flex;
    align-items: center;
    justify-content: center;
    width: 30px;
    height: 30px;
}

.control button + button {
    height: 31px;
    border-top: 1px solid #ccc;
}

.attribution {
    position: absolute;
    right: 0;
    bottom: 0;
    padding: 0 5px;
    background: rgba(255, 255, 255, 0.7);
    font-size: 11px;
    line-height: 16px;
}

.attribution a {
    color: #0078a8;
}

/* clock */
.clock-face {
    display: flex;
    flex: 1;
    align-items: center;
    padding: 0 9px 7px;
}

.clock-face svg {
    width: 100%;
}

/* problems by severity */
.severity {
    table-layout: auto;
}

.severity th:first-child {
    width: 30%;
}

.severity td {
    height: 31px;
}

.severity th:last-child {
    padding-right: 11px;
}

.severity td button,
.hosts td a {
    border-bottom: 1px dotted #1f2c33;
    line-height: 14px;
}

.high {
    background: #e97659;
}

.average {
    background: #ffa059;
}

.warning {
    background: #ffc859;
}

.high,
.average,
.warning {
    background-clip: padding-box;
    color: #5a3a10;
}

/* graph */
.graph h2 {
    padding-bottom: 0;
}

.graph-svg {
    width: 100%;
    font-size: 11px;
}

.grid {
    fill: none;
    stroke: #ccd0d2;
    stroke-dasharray: 2 2;
}

.axis {
    fill: none;
    stroke: #c5d0d5;
}

.utilization {
    fill: #fb6d84;
    fill-opacity: 0.3;
    stroke: #f7a3b2;
    stroke-width: 2;
}

.user-time {
    fill: #f03a54;
    fill-opacity: 0.3;
    stroke: #dd6c80;
    stroke-width: 2;
}

.interrupt {
    fill: none;
    stroke: #a03a50;
    stroke-width: 2;
}

.y-labels {
    text-anchor: end;
}

.x-labels {
    text-anchor: middle;
}

.legend {
    display: flex;
    gap: 10px;
    margin: 0;
    padding: 3px 9px;
    list-style: none;
}

.legend li {
    display: flex;
    align-items: center;
    gap: 4px;
}

.legend li::before {
    width: 10px;
    height: 4px;
    content: "";
}

.legend .dark::before {
    background: #7a0010;
}

.legend .red::before {
    background: #d11d38;
}

.legend .pink::before {
    background: #fb6d8c;
}

/* top hosts */
.hosts td {
    height: 33px;
}

.hosts td a {
    color: #1f2c33;
}

.c-name {
    width: 174px;
}

.c-bar {
    width: 99px;
}

.c-value {
    width: 64px;
}

.c-1m {
    width: 61px;
}

.c-5m,
.c-15m {
    width: 71px;
}

.hosts th:nth-child(n+3),
.hosts td:nth-child(n+4) {
    text-align: center;
}

.bar {
    display: block;
    width: 87px;
    height: 20px;
    padding: 1px;
    border: 1px solid #a9b5ba;
    border-radius: 2px;
    background:
        linear-gradient(rgba(255, 255, 255, 0.3), transparent 20%, transparent 80%, rgba(100, 100, 100, 0.2)) content-box,
        repeating-linear-gradient(to right, transparent 0 6px, #fff 6px 7px) content-box,
        linear-gradient(to right, #439b43 0 7px, #d0e9d3 7px 42px, #ffffb5 42px 70px, #ffddbb 70px 77px, #ffcabd 77px) content-box;
}

/* action log */
.log-body {
    display: flex;
    flex: 1;
    min-height: 0;
}

.log {
    flex: 1;
    align-self: flex-start;
}

.log td {
    padding-top: 6px;
    vertical-align: top;
}

.l-time {
    width: 83px;
}

.l-action {
    width: 75px;
}

.l-type {
    width: 53px;
}

.l-to {
    width: 113px;
}

.l-status {
    width: 70px;
}

.l-info {
    width: 39px;
}

.log .sent {
    color: #429e47;
}

/* scrollbars */
.log-scroll,
.page-scroll {
    display: flex;
    flex-direction: column;
    flex-shrink: 0;
    align-items: center;
    background: #f1f1f1;
}

.log-scroll {
    width: 11px;
    padding: 5px 0;
}

.page-scroll {
    width: 17px;
    padding: 7px 0;
}

.up,
.down {
    border: 3px solid transparent;
}

.up {
    border-top: none;
    border-bottom: 4px solid #a3a3a3;
}

.down {
    margin-top: auto;
    border-top: 4px solid #505050;
    border-bottom: none;
}

.thumb {
    width: 13px;
    height: 80%;
    margin-top: 6px;
    background: #c1c1c1;
}

.log-scroll .thumb {
    width: 7px;
    height: 11px;
    margin-top: 3px;
}

.cursor {
    position: fixed;
    top: 1159px;
    left: 1052px;
}
```
